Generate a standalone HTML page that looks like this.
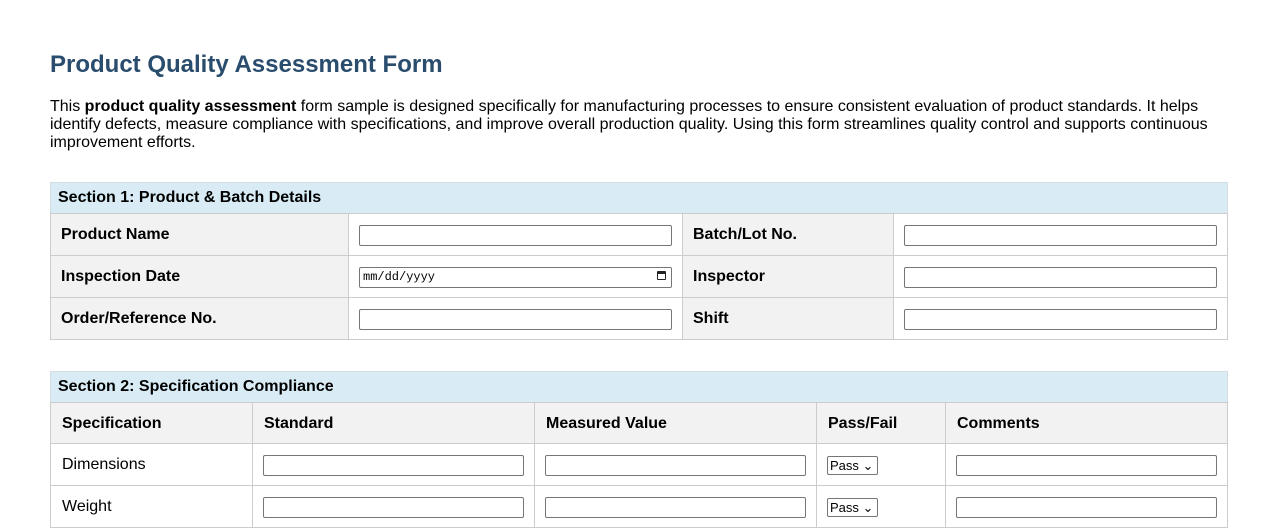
<!DOCTYPE html>
<html><head><style>
body{margin:0;font-family:"Liberation Sans",Arial,sans-serif;color:#000;background:#fff;}
.wrap{position:absolute;left:50px;top:0;width:1178px;}
h1{position:absolute;top:51px;left:0;margin:0;font-size:24px;color:#2a4d6e;font-weight:bold;}
p{position:absolute;top:98px;left:0;margin:0;font-size:16px;line-height:18px;width:1178px;}
.sec{position:absolute;left:0;width:1178px;}
.hd{height:31px;background:#d9ecf5;border:1px solid #d3dde2;border-bottom:none;box-sizing:border-box;font-weight:bold;font-size:16px;padding:6px 7px;}
table{border-collapse:collapse;table-layout:fixed;width:1177px;font-size:16px;}
td{border:1px solid #ccc;padding:1px 10px 0;height:41px;box-sizing:border-box;}
td.l{background:#f2f2f2;font-weight:bold;}
th{border:1px solid #ccc;background:#f2f2f2;text-align:left;padding:1px 11px 0;height:39px;}
input{width:313px;height:21px;box-sizing:border-box;border:1px solid #767676;border-radius:2px;margin:0;font-family:"Liberation Mono",monospace;font-size:12px;padding:1px 3px;}
.sel{display:inline-block;border:1px solid #767676;border-radius:2px;font-size:13px;padding:1px 2px;height:19px;box-sizing:border-box;width:51px;}
</style></head><body>
<div class="wrap">
<h1>Product Quality Assessment Form</h1>
<p>This <b>product quality assessment</b> form sample is designed specifically for manufacturing processes to ensure consistent evaluation of product standards. It helps identify defects, measure compliance with specifications, and improve overall production quality. Using this form streamlines quality control and supports continuous improvement efforts.</p>
<div class="sec" style="top:182px">
<div class="hd">Section 1: Product &amp; Batch Details</div>
<table>
<col style="width:298px"><col style="width:334px"><col style="width:211px"><col style="width:334px">
<tr style="height:42px"><td class="l">Product Name</td><td><input></td><td class="l">Batch/Lot No.</td><td><input></td></tr>
<tr style="height:42px"><td class="l">Inspection Date</td><td><div style="position:relative"><input value="mm/dd/yyyy"><span style="position:absolute;right:6px;top:4px;width:9px;height:9px;border:1.5px solid #222;border-top-width:3px;box-sizing:border-box;border-radius:1px"></span></div></td><td class="l">Inspector</td><td><input></td></tr>
<tr style="height:42px"><td class="l">Order/Reference No.</td><td><input></td><td class="l">Shift</td><td><input></td></tr>
</table></div>
<div class="sec" style="top:371px">
<div class="hd">Section 2: Specification Compliance</div>
<table>
<col style="width:202px"><col style="width:282px"><col style="width:282px"><col style="width:129px"><col style="width:282px">
<tr><th>Specification</th><th>Standard</th><th>Measured Value</th><th>Pass/Fail</th><th>Comments</th></tr>
<tr style="height:42px"><td style="padding-left:11px">Dimensions</td><td><input style="width:261px"></td><td><input style="width:261px"></td><td><span class="sel">Pass ⌄</span></td><td><input style="width:261px"></td></tr>
<tr style="height:42px"><td style="padding-left:11px">Weight</td><td><input style="width:261px"></td><td><input style="width:261px"></td><td><span class="sel">Pass ⌄</span></td><td><input style="width:261px"></td></tr>
</table></div>
</div>
</body></html>
